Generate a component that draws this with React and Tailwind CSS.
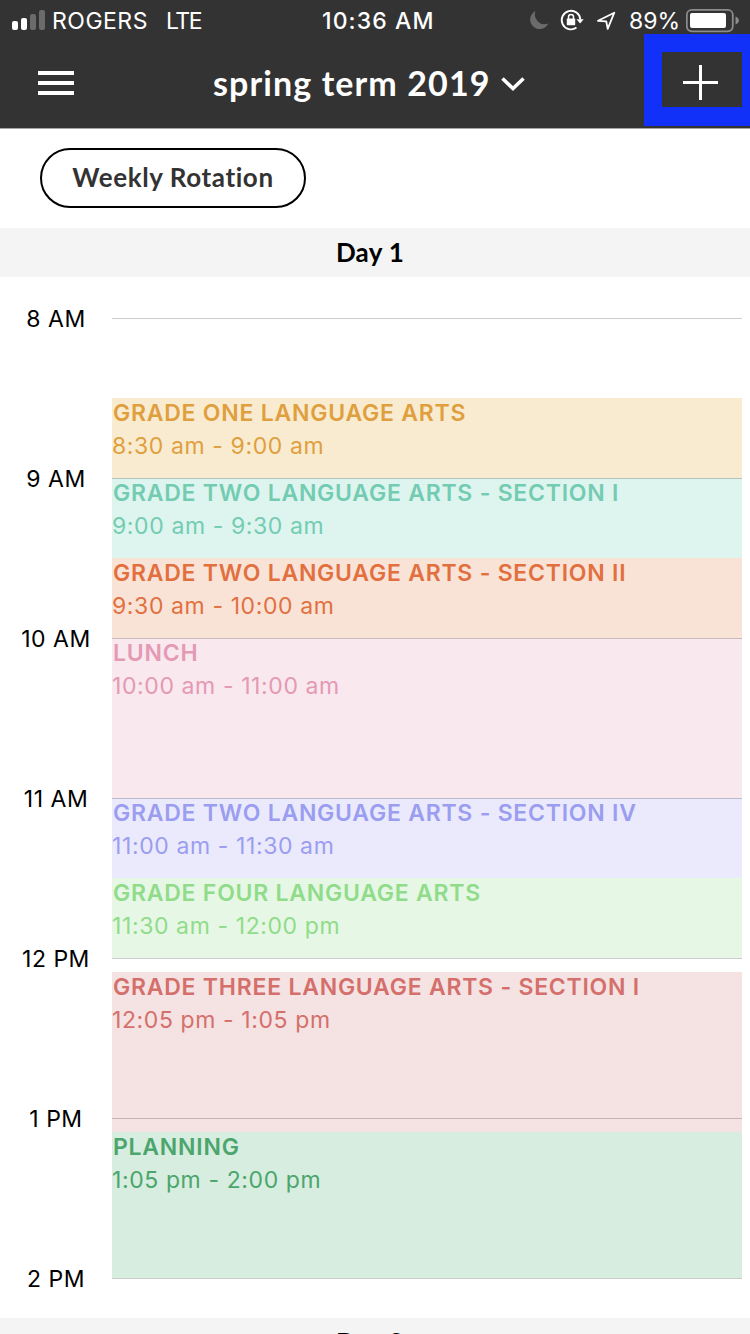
import React from 'react'

const HOURS = ['8 AM', '9 AM', '10 AM', '11 AM', '12 PM', '1 PM', '2 PM']

const EVENTS = [
  { title: 'GRADE ONE LANGUAGE ARTS', time: '8:30 am - 9:00 am', cls: 'mt-20 h-20 bg-[#f9ebcf] text-[#e09f3e]' },
  { title: 'GRADE TWO LANGUAGE ARTS - SECTION I', time: '9:00 am - 9:30 am', cls: 'h-20 bg-[#def5ef] text-[#73ccb2]' },
  { title: 'GRADE TWO LANGUAGE ARTS - SECTION II', time: '9:30 am - 10:00 am', cls: 'h-20 bg-[#f9e3d7] text-[#e2703f]' },
  { title: 'LUNCH', time: '10:00 am - 11:00 am', cls: 'h-40 bg-[#f9e8ee] text-[#e499b4]' },
  { title: 'GRADE TWO LANGUAGE ARTS - SECTION IV', time: '11:00 am - 11:30 am', cls: 'h-20 bg-[#eaeafc] text-[#9b9df0]' },
  { title: 'GRADE FOUR LANGUAGE ARTS', time: '11:30 am - 12:00 pm', cls: 'h-20 bg-[#e6f7e5] text-[#90dc8a]' },
  { title: 'GRADE THREE LANGUAGE ARTS - SECTION I', time: '12:05 pm - 1:05 pm', cls: 'mt-3.5 h-40 bg-[#f5e2e2] text-[#d46f6b]' },
  { title: 'PLANNING', time: '1:05 pm - 2:00 pm', cls: 'h-[146px] bg-[#d6ede0] text-[#4ca56c]' },
]

function StatusBar() {
  return (
    <div className="flex h-10 items-center pl-3 text-[23px] leading-10">
      <div className="flex h-5 items-end gap-[3px]">
        <span className="h-[9px] w-1.5 rounded-[2px] bg-white" />
        <span className="h-3 w-1.5 rounded-[2px] bg-white" />
        <span className="h-4 w-1.5 rounded-[2px] bg-[#6b6b6b]" />
        <span className="h-5 w-1.5 rounded-[2px] bg-[#6b6b6b]" />
      </div>
      <span className="ml-[7px] w-[114px] whitespace-nowrap pt-px tracking-[0.5px]">ROGERS</span>
      <span className="w-[156px] whitespace-nowrap pt-px tracking-[-1.5px]">LTE</span>
      <span className="w-[206px] whitespace-nowrap pt-px font-medium tracking-[1.1px]">10:36 AM</span>
      <svg className="h-10 w-[100px]" viewBox="528 0 100 40" fill="none">
        <path d="M535.500 11a9.500 9.500 0 1 0 12.800 12.500A9.800 9.800 0 0 1 535.500 11z" fill="#6b6b6b" />
        <path d="M580.300 19.500A9.300 9.300 0 1 0 576.500 27.600" stroke="#fff" strokeWidth="1.900" />
        <path d="M576.500 19.300h7.200l-3.600 4.300z" fill="#fff" />
        <rect x="566.800" y="18.500" width="8.400" height="6.700" rx="0.800" fill="#fff" />
        <path d="M568.500 19v-2a2.500 2.500 0 0 1 5 0v2" stroke="#fff" strokeWidth="1.500" />
        <path d="M598 20.800 614.300 12.700 607.700 28.800 606.200 21.300z" stroke="#fff" strokeWidth="1.800" strokeLinejoin="round" />
      </svg>
      <span className="ml-px w-[57px] whitespace-nowrap pt-px">89%</span>
      <svg className="h-10 w-14" viewBox="686 0 56 40" fill="none">
        <rect x="686.800" y="9.800" width="46" height="21.500" rx="5" stroke="#8c8c8c" strokeWidth="1.800" />
        <rect x="690" y="13" width="36" height="15" rx="2" fill="#fff" />
        <path d="M735.500 16.500c4.500 1.500 4.500 6.500 0 8z" fill="#8c8c8c" />
      </svg>
    </div>
  )
}

function NavBar() {
  return (
    <div className="flex h-[88px] items-start">
      <button className="ml-[38px] mt-[31px] flex w-9 flex-col gap-1.5" aria-label="Menu">
        <span className="h-1 w-full bg-white" />
        <span className="h-1 w-full bg-white" />
        <span className="h-1 w-full bg-white" />
      </button>
      <div className="ml-[139px] mt-5 flex w-[431px] items-center font-['Lato',sans-serif]">
        <span className="w-[288px] whitespace-nowrap text-[34px] font-bold leading-[46px] tracking-[1.1px]">spring term 2019</span>
        <svg className="mt-0.5 h-4 w-6" viewBox="0 0 24 16" fill="none" stroke="#fff" strokeWidth="3.600">
          <path d="M1.500 2.500 12 12.500 22.500 2.500" />
        </svg>
      </div>
    </div>
  )
}

function DayHeader({ label }) {
  return (
    <div className="h-[49px] shrink-0 bg-[#f4f4f4] pr-2.5 text-center font-['Lato',sans-serif] text-[26px] font-bold leading-[49px] tracking-[0.3px]">
      {label}
    </div>
  )
}

function DaySchedule() {
  return (
    <div className="flex h-[1041px] shrink-0 pr-2 pt-[41px]">
      <div className="-mt-5 w-28 shrink-0">
        {HOURS.map(hour => (
          <div key={hour} className="h-40 text-center text-[23px] leading-[43px] tracking-[0.5px]">{hour}</div>
        ))}
      </div>
      <div className="relative flex-1">
        {EVENTS.map(e => (
          <div key={e.title} className={`overflow-hidden whitespace-nowrap text-[23px] ${e.cls}`}>
            <div className="h-[31px] pl-px font-semibold leading-[31px] tracking-[0.76px]">{e.title}</div>
            <div className="leading-[35px] tracking-[0.6px]">{e.time}</div>
          </div>
        ))}
        {/* hour lines run over the events */}
        <div className="absolute inset-x-0 top-0">
          {HOURS.map(hour => (
            <div key={hour} className="h-40 border-t border-black/20" />
          ))}
        </div>
      </div>
    </div>
  )
}

export default function App() {
  return (
    <div className="flex h-[1334px] w-[750px] flex-col overflow-hidden bg-white font-['Inter',sans-serif] text-black">
      <header className="relative h-32 shrink-0 bg-[#333333] text-white">
        <StatusBar />
        <NavBar />
        {/* highlight around the add button */}
        <button className="absolute left-[644px] top-[34px] flex h-[92px] w-[116px] justify-center border-[18px] border-b-[19px] border-[#1130f8] bg-[#333333] pr-[3px] pt-[13px]" aria-label="Add">
          <svg className="h-[35px] w-[35px]" viewBox="0 0 35 35" stroke="#fff" strokeWidth="3">
            <path d="M17.500 0v35M0 17.500h35" />
          </svg>
        </button>
      </header>
      <div className="flex h-[100px] shrink-0 items-start border-t border-[#a5a5a5] pl-10 pt-[19px]">
        <button className="h-[60px] w-[266px] rounded-full border-2 border-black pb-0.5 font-['Lato',sans-serif] text-[26px] font-bold leading-[54px] tracking-[0.6px] text-[#333333]">
          Weekly Rotation
        </button>
      </div>
      <DayHeader label="Day 1" />
      <DaySchedule />
      <DayHeader label="Day 2" />
    </div>
  )
}
